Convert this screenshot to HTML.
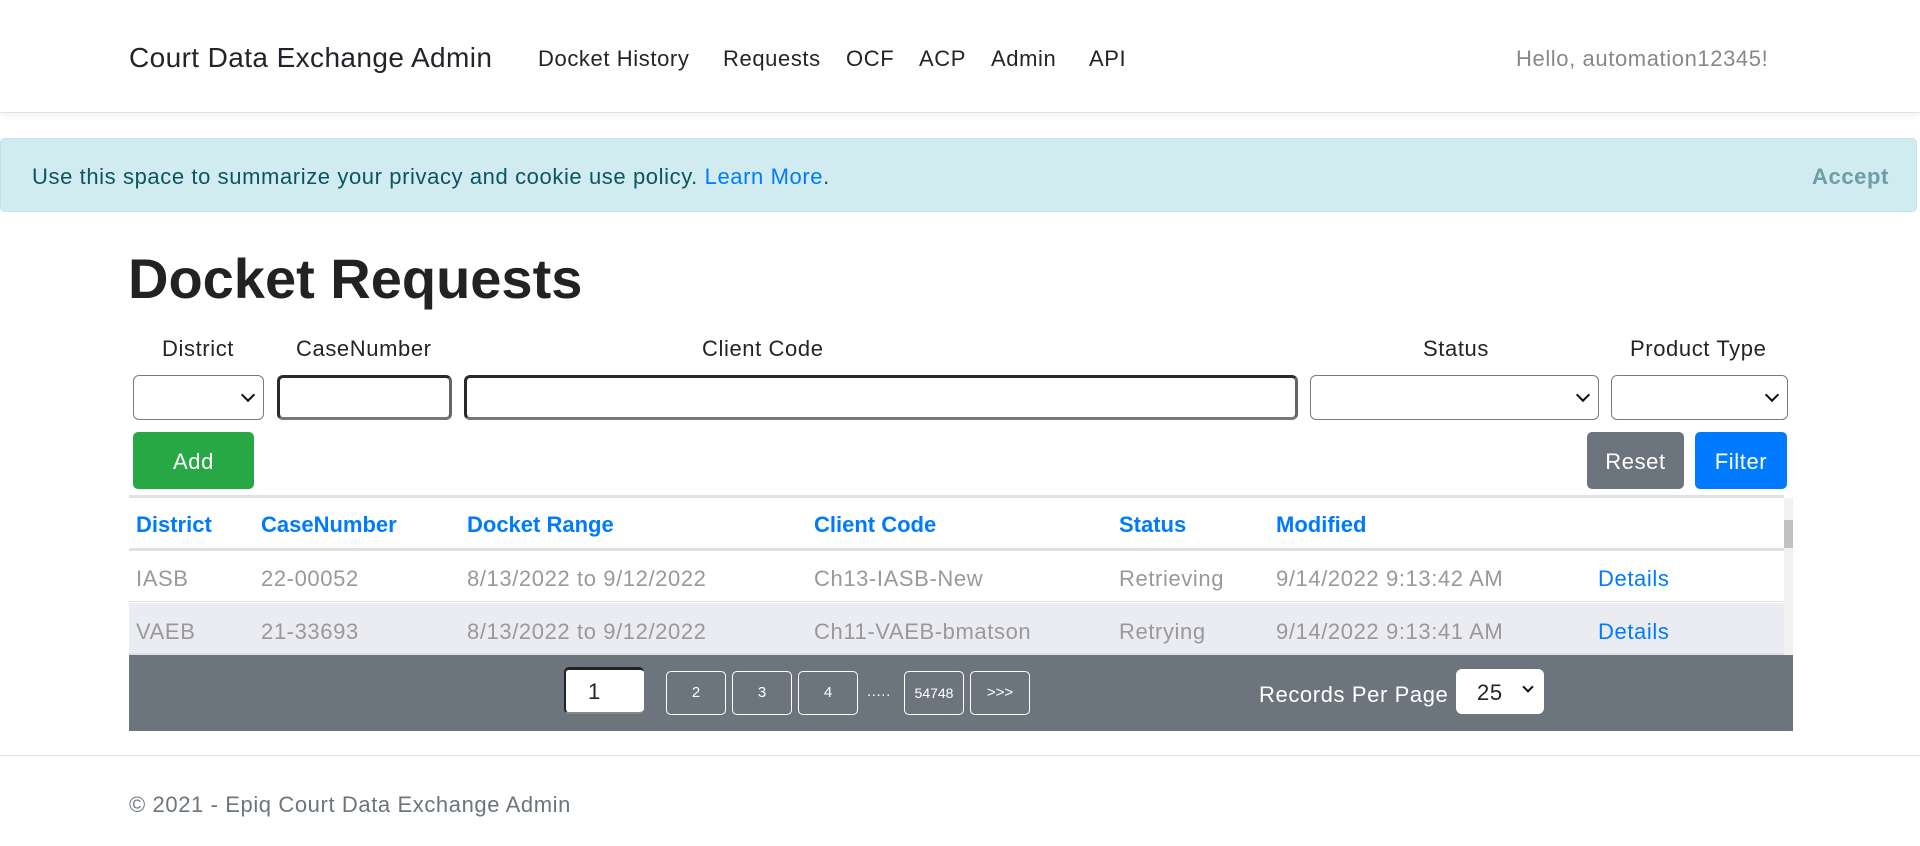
<!DOCTYPE html>
<html><head><meta charset="utf-8"><style>
*{box-sizing:border-box;margin:0;padding:0}
body{width:1920px;height:846px;overflow:hidden;background:#fff;font-family:"Liberation Sans",sans-serif;color:#212529;position:relative;letter-spacing:.6px}
.a{position:absolute;white-space:nowrap}
.nav{position:absolute;left:0;top:0;width:1920px;height:113px;border-bottom:1px solid #e2e2e2;box-shadow:0 2px 6px rgba(0,0,0,.06)}
.alert{position:absolute;left:0;top:138px;width:1917px;height:74px;background:#d1ecf1;border:1px solid #bee5eb;border-radius:5px;color:#0c5460;font-size:22px}
.box{position:absolute;border-radius:6px;background:#fff}
.sel{border:1px solid #7a7a7a}
.inp{border:3px solid #2a2a2a;border-bottom-color:#777;border-right-color:#666}
.chev{position:absolute;right:10px;top:14px;width:10px;height:10px;border-right:2px solid #111;border-bottom:2px solid #111;transform:rotate(45deg) }
.btn{position:absolute;border-radius:5px;color:#fff;font-size:22px;text-align:center}
.th{position:absolute;top:512px;color:#007bff;font-weight:bold;font-size:22px;letter-spacing:0}
.td{position:absolute;color:#999;font-size:22px}
.pg{position:absolute;top:671px;height:44px;border:1px solid #fff;border-radius:5px;color:#fff;font-size:15px;text-align:center;line-height:42px;letter-spacing:0}
</style></head><body>
<div class="nav">
<div class="a" style="left:129px;top:42px;font-size:28px;color:#212529;letter-spacing:.4px">Court Data Exchange Admin</div>
<div class="a" style="left:538px;top:46px;font-size:22px">Docket History</div>
<div class="a" style="left:723px;top:46px;font-size:22px">Requests</div>
<div class="a" style="left:846px;top:46px;font-size:22px">OCF</div>
<div class="a" style="left:919px;top:46px;font-size:22px">ACP</div>
<div class="a" style="left:991px;top:46px;font-size:22px">Admin</div>
<div class="a" style="left:1089px;top:46px;font-size:22px">API</div>
<div class="a" style="left:1516px;top:46px;font-size:22px;color:#888">Hello, automation12345!</div>
</div>
<div class="alert">
<div class="a" style="left:31px;top:25px">Use this space to summarize your privacy and cookie use policy. <span style="color:#007bff">Learn More</span>.</div>
<div class="a" style="left:1811px;top:25px;font-weight:bold;color:#6c9ea6">Accept</div>
</div>
<div class="a" style="left:128px;top:246px;font-size:56px;font-weight:bold;color:#222;letter-spacing:0">Docket Requests</div>
<div class="a" style="left:162px;top:336px;font-size:22px">District</div>
<div class="a" style="left:296px;top:336px;font-size:22px">CaseNumber</div>
<div class="a" style="left:702px;top:336px;font-size:22px">Client Code</div>
<div class="a" style="left:1423px;top:336px;font-size:22px">Status</div>
<div class="a" style="left:1630px;top:336px;font-size:22px">Product Type</div>
<div class="box sel" style="left:133px;top:375px;width:131px;height:45px"><div class="chev"></div></div>
<div class="box inp" style="left:277px;top:375px;width:175px;height:45px"></div>
<div class="box inp" style="left:464px;top:375px;width:834px;height:45px"></div>
<div class="box sel" style="left:1310px;top:375px;width:289px;height:45px"><div class="chev"></div></div>
<div class="box sel" style="left:1611px;top:375px;width:177px;height:45px"><div class="chev"></div></div>
<div class="btn" style="left:133px;top:432px;width:121px;height:57px;background:#28a745;line-height:60px">Add</div>
<div class="btn" style="left:1587px;top:432px;width:97px;height:57px;background:#6c757d;line-height:60px">Reset</div>
<div class="btn" style="left:1695px;top:432px;width:92px;height:57px;background:#007bff;line-height:60px">Filter</div>
<div style="position:absolute;left:129px;top:495px;width:1655px;height:3px;background:#dee2e6"></div>
<div style="position:absolute;left:129px;top:548px;width:1655px;height:3px;background:#dee2e6"></div>
<div style="position:absolute;left:129px;top:551px;width:1655px;height:51px;background:#fff;border-bottom:1px solid #dee2e6"></div>
<div style="position:absolute;left:129px;top:603px;width:1655px;height:52px;background:#ebecf2;border-bottom:2px solid #dee2e6"></div>
<div style="position:absolute;left:1784px;top:498px;width:9px;height:157px;background:#f1f1f1"><div style="margin-top:22px;height:28px;width:9px;background:#c1c1c1"></div></div>
<div class="th" style="left:136px">District</div>
<div class="th" style="left:261px">CaseNumber</div>
<div class="th" style="left:467px">Docket Range</div>
<div class="th" style="left:814px">Client Code</div>
<div class="th" style="left:1119px">Status</div>
<div class="th" style="left:1276px">Modified</div>
<div class="td" style="left:136px;top:566px">IASB</div>
<div class="td" style="left:261px;top:566px">22-00052</div>
<div class="td" style="left:467px;top:566px">8/13/2022 to 9/12/2022</div>
<div class="td" style="left:814px;top:566px">Ch13-IASB-New</div>
<div class="td" style="left:1119px;top:566px">Retrieving</div>
<div class="td" style="left:1276px;top:566px">9/14/2022 9:13:42 AM</div>
<div class="td" style="left:1598px;top:566px;color:#007bff">Details</div>
<div class="td" style="left:136px;top:619px">VAEB</div>
<div class="td" style="left:261px;top:619px">21-33693</div>
<div class="td" style="left:467px;top:619px">8/13/2022 to 9/12/2022</div>
<div class="td" style="left:814px;top:619px">Ch11-VAEB-bmatson</div>
<div class="td" style="left:1119px;top:619px">Retrying</div>
<div class="td" style="left:1276px;top:619px">9/14/2022 9:13:41 AM</div>
<div class="td" style="left:1598px;top:619px;color:#007bff">Details</div>
<div style="position:absolute;left:129px;top:655px;width:1664px;height:76px;background:#6c757d"></div>
<div style="position:absolute;left:564px;top:667px;width:80px;height:47px;background:#fff;border-radius:5px;border-top:3px solid #222;border-left:2px solid #222;border-bottom:2px solid #888;font-size:22px;line-height:44px;padding-left:22px">1</div>
<div class="pg" style="left:666px;width:60px">2</div>
<div class="pg" style="left:732px;width:60px">3</div>
<div class="pg" style="left:798px;width:60px">4</div>
<div class="a" style="left:867px;top:683px;color:#fff;font-size:15px">.....</div>
<div class="pg" style="left:904px;width:60px;font-size:14px">54748</div>
<div class="pg" style="left:970px;width:60px">&gt;&gt;&gt;</div>
<div class="a" style="left:1259px;top:682px;color:#fff;font-size:22px">Records Per Page</div>
<div class="box" style="left:1456px;top:669px;width:88px;height:45px;font-size:22px;line-height:47px;padding-left:21px">25<div class="chev" style="top:14px;right:12px;width:8px;height:8px"></div></div>
<div style="position:absolute;left:0;top:755px;width:1920px;height:1px;background:#e5e5e5"></div>
<div class="a" style="left:129px;top:792px;font-size:22px;color:#6c757d">© 2021 - Epiq Court Data Exchange Admin</div>
</body></html>
